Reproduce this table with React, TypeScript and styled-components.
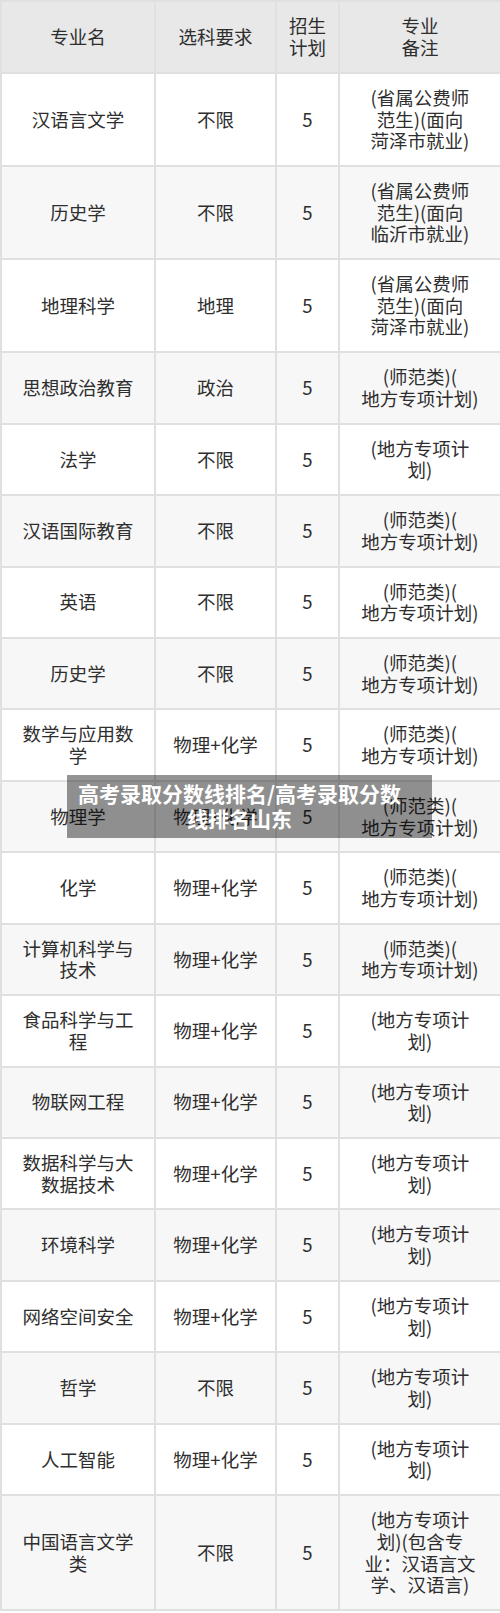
import React from "react";
import styled, { createGlobalStyle } from "styled-components";

type Major = {
  name: string;
  subject: string;
  plan: string;
  note: string;
};

const GlobalStyle = createGlobalStyle`
  html, body {
    margin: 0;
    padding: 0;
    background: #fff;
  }
  body {
    font-family: "Noto Sans CJK SC", "Noto Sans", sans-serif;
    color: #2e2e2e;
  }
`;

const Page = styled.div`
  position: relative;
  width: 500px;
`;

const Table = styled.table`
  width: 500px;
  border-collapse: collapse;
  table-layout: fixed;
  border: 2px solid #e0e0e0;
  font-size: 18.5px;
  line-height: 21.7px;
`;

const Col = styled.col<{ $w: number }>`
  width: ${(p) => p.$w}px;
`;

const HeadCell = styled.th`
  background: #e8e8e8;
  font-weight: normal;
  color: #2e2e2e;
  padding: 13.2px 8px;
  border: 2px solid #e0e0e0;
  text-align: center;
  vertical-align: middle;
  white-space: pre-line;
`;

const Row = styled.tr<{ $striped: boolean }>`
  background: ${(p) => (p.$striped ? "#f7f7f7" : "#fff")};
`;

const Cell = styled.td`
  padding: 13.03px 8px;
  border: 2px solid #e0e0e0;
  text-align: center;
  vertical-align: middle;
  white-space: pre-line;
`;

const Watermark = styled.div`
  position: absolute;
  left: 67px;
  top: 775px;
  width: 365px;
  height: 63px;
  box-sizing: border-box;
  padding: 6px 30px 6px 10px;
  background: rgba(0, 0, 0, 0.42);
  color: #fff;
  font-size: 21px;
  font-weight: 700;
  line-height: 25px;
  text-align: center;
`;

const NORMAL = "(师范类)(\n地方专项计划)";
const LOCAL = "(地方专项计\n划)";

const majors: Major[] = [
  { name: "汉语言文学", subject: "不限", plan: "5", note: "(省属公费师\n范生)(面向\n菏泽市就业)" },
  { name: "历史学", subject: "不限", plan: "5", note: "(省属公费师\n范生)(面向\n临沂市就业)" },
  { name: "地理科学", subject: "地理", plan: "5", note: "(省属公费师\n范生)(面向\n菏泽市就业)" },
  { name: "思想政治教育", subject: "政治", plan: "5", note: NORMAL },
  { name: "法学", subject: "不限", plan: "5", note: LOCAL },
  { name: "汉语国际教育", subject: "不限", plan: "5", note: NORMAL },
  { name: "英语", subject: "不限", plan: "5", note: NORMAL },
  { name: "历史学", subject: "不限", plan: "5", note: NORMAL },
  { name: "数学与应用数\n学", subject: "物理+化学", plan: "5", note: NORMAL },
  { name: "物理学", subject: "物理+化学", plan: "5", note: NORMAL },
  { name: "化学", subject: "物理+化学", plan: "5", note: NORMAL },
  { name: "计算机科学与\n技术", subject: "物理+化学", plan: "5", note: NORMAL },
  { name: "食品科学与工\n程", subject: "物理+化学", plan: "5", note: LOCAL },
  { name: "物联网工程", subject: "物理+化学", plan: "5", note: LOCAL },
  { name: "数据科学与大\n数据技术", subject: "物理+化学", plan: "5", note: LOCAL },
  { name: "环境科学", subject: "物理+化学", plan: "5", note: LOCAL },
  { name: "网络空间安全", subject: "物理+化学", plan: "5", note: LOCAL },
  { name: "哲学", subject: "不限", plan: "5", note: LOCAL },
  { name: "人工智能", subject: "物理+化学", plan: "5", note: LOCAL },
  {
    name: "中国语言文学\n类",
    subject: "不限",
    plan: "5",
    note: "(地方专项计\n划)(包含专\n业：汉语言文\n学、汉语言)",
  },
];

export default function App() {
  return (
    <Page>
      <GlobalStyle />
      <Table>
        <colgroup>
          <Col $w={154} />
          <Col $w={121} />
          <Col $w={63} />
          <Col $w={162} />
        </colgroup>
        <thead>
          <tr>
            <HeadCell>专业名</HeadCell>
            <HeadCell>选科要求</HeadCell>
            <HeadCell>{"招生\n计划"}</HeadCell>
            <HeadCell>{"专业\n备注"}</HeadCell>
          </tr>
        </thead>
        <tbody>
          {majors.map((m, i) => (
            <Row key={i} $striped={i % 2 === 1}>
              <Cell>{m.name}</Cell>
              <Cell>{m.subject}</Cell>
              <Cell>{m.plan}</Cell>
              <Cell>{m.note}</Cell>
            </Row>
          ))}
        </tbody>
      </Table>
      <Watermark>
        高考录取分数线排名/高考录取分数
        <br />
        线排名山东
      </Watermark>
    </Page>
  );
}
